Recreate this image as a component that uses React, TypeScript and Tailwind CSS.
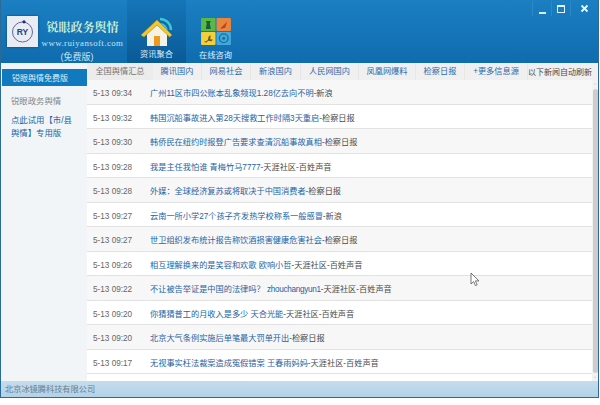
import type { ReactNode } from "react";

const rows: [string, ReactNode, string][] = [
  ["5-13 09:34", "广州11区市四公账本乱象频现1.28亿去向不明", "-新浪"],
  ["5-13 09:32", "韩国沉船事故进入第28天搜救工作时隔3天重启", "-检察日报"],
  ["5-13 09:30", "韩侨民在纽约时报登广告要求查清沉船事故真相", "-检察日报"],
  ["5-13 09:28", "我是主任我怕谁 青梅竹马7777", "-天涯社区-百姓声音"],
  ["5-13 09:28", "外媒：全球经济复苏或将取决于中国消费者", "-检察日报"],
  ["5-13 09:27", "云南一所小学27个孩子齐发热学校称系一般感冒", "-新浪"],
  ["5-13 09:27", "世卫组织发布统计报告称饮酒损害健康危害社会", "-检察日报"],
  ["5-13 09:26", "相互理解换来的是笑容和欢歌 欧响小哲", "-天涯社区-百姓声音"],
  ["5-13 09:22", <>不让被告举证是中国的法律吗？ <span className="tracking-[-0.3px]">zhouchangyun1</span></>, "-天涯社区-百姓声音"],
  ["5-13 09:20", "你猜猜普工的月收入是多少 天合光能", "-天涯社区-百姓声音"],
  ["5-13 09:20", "北京大气条例实施后单笔最大罚单开出", "-检察日报"],
  ["5-13 09:17", "无视事实枉法裁案造成冤假错案 王春雨妈妈", "-天涯社区-百姓声音"],
];

const tabs: [string, string][] = [
  ["腾讯国内", "w-[49px]"],
  ["网易社会", "w-[49px]"],
  ["新浪国内", "w-[50px]"],
  ["人民网国内", "w-[58px]"],
  ["凤凰网爆料", "w-[57px]"],
  ["检察日报", "w-[49px]"],
  ["+更多信息源", "w-[63px]"],
];

function House() {
  return (
    <svg width="34" height="32" viewBox="0 0 34 32" className="block">
      <path d="M20 4a11 11 0 0 1 11 11" fill="none" stroke="#3fc4d8" strokeWidth="2.4" />
      <path d="M20 9a6.5 6.5 0 0 1 6.5 6.5" fill="none" stroke="#3fc4d8" strokeWidth="2.2" />
      <path d="M7 19v12h20V19L17 10z" fill="#f4f1e6" />
      <path d="M1 20L17 5l15 15-2.5 2L17 10 4 22z" fill="#f3c72e" stroke="#b98a12" strokeWidth="0.5" />
      <rect x="14" y="21" width="6" height="10" fill="#ee9a1f" />
    </svg>
  );
}

function Tiles() {
  return (
    <svg width="30" height="27" viewBox="0 0 31 28" className="block">
      <rect x="0" y="0" width="15" height="13.5" rx="1" fill="#58b848" />
      <rect x="16" y="0" width="15" height="13.5" rx="1" fill="#e8863c" />
      <rect x="0" y="14.5" width="15" height="13.5" rx="1" fill="#f2cf3c" />
      <rect x="16" y="14.5" width="15" height="13.5" rx="1" fill="#42a9dc" />
      <path d="M5 3h5l-1 3 1 4v1.5H5V10l1-4z" fill="#1c5a3a" />
      <path d="M20 11l7-7-2 6-3 1z" fill="#c23a22" />
      <path d="M3 25l4-2 1-4 2-1-.5 4 3 .5-2 1.5-3-.5-2 2z" fill="#6b5a1c" />
      <circle cx="23.5" cy="21" r="4.5" fill="none" stroke="#1a6f9e" strokeWidth="1.4" />
      <circle cx="23.5" cy="21" r="1.6" fill="#1a6f9e" />
    </svg>
  );
}

function Logo() {
  return (
    <div className="flex h-[31px] w-[31px] shrink-0 items-center justify-center bg-[#e9ecf3] shadow-[0_0_2px_#0b3f6b]">
      <svg width="27" height="27" viewBox="0 0 27 27" className="block">
        <circle cx="13.5" cy="14" r="10" fill="none" stroke="#3a4a8c" strokeWidth="0.8" />
        <circle cx="15" cy="3.8" r="1.6" fill="#25306b" />
        <text x="13.5" y="17" textAnchor="middle" fontSize="8.5" fontWeight="700" fill="#2d3a82" fontFamily="'Liberation Sans', sans-serif">RY</text>
      </svg>
    </div>
  );
}

export default function App() {
  return (
    <div className="relative h-[405px] w-[600px] overflow-hidden bg-white font-['Liberation_Sans','Noto_Sans_CJK_SC',sans-serif] text-[8.2px]">
      <div className="flex h-[398px] w-[599px] flex-col border border-t-0 border-[#2a6a96]">
        <header className="relative flex h-[63px] shrink-0 bg-gradient-to-b from-[#1b7fc2] to-[#0f6cae]">
          <div className="flex w-[126px] pl-[6px] pt-[16px]">
            <Logo />
            <div className="ml-[4px] flex w-[81px] flex-col items-center">
              <div className="mt-[5px] whitespace-nowrap font-['Liberation_Serif','Noto_Serif_CJK_SC','Noto_Sans_CJK_SC',serif] text-[12px] font-bold leading-[14px] text-[#c9efd5]">锐眼政务舆情</div>
              <div className="mt-[3px] whitespace-nowrap font-['Liberation_Serif',serif] text-[8.8px] leading-[10px] tracking-[0.45px] text-[#c4e4f4]">www.ruiyansoft.com</div>
              <div className="mr-[11px] mt-[4px] whitespace-nowrap text-[9px] leading-[10px] text-[#c4e4f4]">(免费版)</div>
            </div>
          </div>
          <div className="flex h-full w-[59px] flex-col items-center bg-gradient-to-b from-[#1576b8] to-[#0a5a96] pt-[15px]">
            <House />
            <div className="mt-[3px] text-[8.2px] leading-[10px] text-[#dff1fb]">资讯聚合</div>
          </div>
          <div className="flex h-full w-[59px] flex-col items-center pt-[18px]">
            <Tiles />
            <div className="mt-[6px] text-[8.2px] leading-[10px] text-[#dff1fb]">在线咨询</div>
          </div>
          <div className="absolute right-[1px] top-[1px] flex h-[15px] items-center text-[#e6f3fb]">
            <div className="flex h-[15px] w-[19px] items-center justify-center border-l border-[#2b8ac6]">
              <span className="mt-[8px] block h-[2px] w-[7px] bg-[#dcecf6]" />
            </div>
            <div className="flex h-[15px] w-[19px] items-center justify-center border-l border-[#2b8ac6]">
              <span className="block h-[8px] w-[8px] border border-t-2 border-[#e6f3fb]" />
            </div>
            <div className="flex h-[15px] w-[27px] items-center justify-center border-l border-[#2b8ac6]">
              <svg width="9" height="9" viewBox="0 0 9 9" className="block">
                <path d="M1.5 1.5l6 6M7.5 1.5l-6 6" stroke="#eef7fc" strokeWidth="1.8" />
              </svg>
            </div>
          </div>
        </header>
        <div className="flex min-h-0 flex-1">
          <aside className="w-[86px] shrink-0 bg-[#f1f5f8] pt-[6px]">
            <div className="ml-px flex h-[17px] w-[85px] items-center bg-[#1179bd] pl-[10px] pt-[2px] text-[8px] text-[#dcf0fb]">锐眼舆情免费版</div>
            <div className="mt-[10px] pl-[10px] text-[8.4px] leading-[10px] text-[#858585]">锐眼政务舆情</div>
            <div className="mt-[8px] w-[72px] pl-[10px] text-[8.4px] leading-[13px] text-[#245f9f]">点此试用【市/县舆情】专用版</div>
          </aside>
          <main className="flex min-w-0 flex-1 flex-col">
            <nav className="flex h-[17px] shrink-0 items-center bg-[#f0f0f0]">
              <div className="flex h-full w-[66px] items-center justify-center bg-[#ececec] pt-[2px] text-[#747474]">全国舆情汇总</div>
              {tabs.map(([t, w]) => (
                <div key={t} className={`flex h-full ${w} items-center justify-center border-r border-[#e6e6e6] pt-[2px] text-[#2e68a8]`}>{t}</div>
              ))}
              <div className="flex h-full flex-1 items-center whitespace-nowrap pt-[2px] text-[8px] text-[#4a4a4a]">以下新闻自动刷新</div>
            </nav>
            <div className="flex min-h-0 flex-1">
              <div className="min-w-0 flex-1">
                {rows.map(([time, title, src], i) => (
                  <div key={i} className={`flex h-[24.5px] items-center border-b border-[#e2e2e2] pt-[5px] ${i % 2 === 0 ? "bg-[#f7f7f7]" : "bg-white"}`}>
                    <span className="ml-[6px] w-[57px] shrink-0 text-[#666]">{time}</span>
                    <span className="whitespace-nowrap text-[#2563a5]">{title}</span>
                    <span className="whitespace-nowrap text-[#4a4a4a]">{src}</span>
                  </div>
                ))}
              </div>
              <div className="flex w-[6px] shrink-0 flex-col items-center bg-[#f2f2f2] py-[2px]">
                <span className="text-[5px] leading-[6px] text-[#bbb]">⌃</span>
                <div className="mt-[1px] w-[5px] flex-1 rounded-sm bg-[#cdcdcd]" />
                <span className="text-[5px] leading-[6px] text-[#bbb]">⌄</span>
              </div>
            </div>
          </main>
        </div>
        <footer className="flex h-[16px] shrink-0 items-center bg-gradient-to-b from-[#c5dcec] to-[#b3d2e8] pl-[4px] pt-[2px] text-[8.2px] text-[#66808f]">北京冰镜腾科技有限公司</footer>
      </div>
      <svg width="10" height="15" viewBox="0 0 10 15" className="absolute left-[470px] top-[272px] block">
        <path d="M1 1v11l2.6-2.4 1.8 4 1.8-.8-1.8-3.9H9z" fill="#fff" stroke="#555" strokeWidth="0.8" />
      </svg>
    </div>
  );
}
